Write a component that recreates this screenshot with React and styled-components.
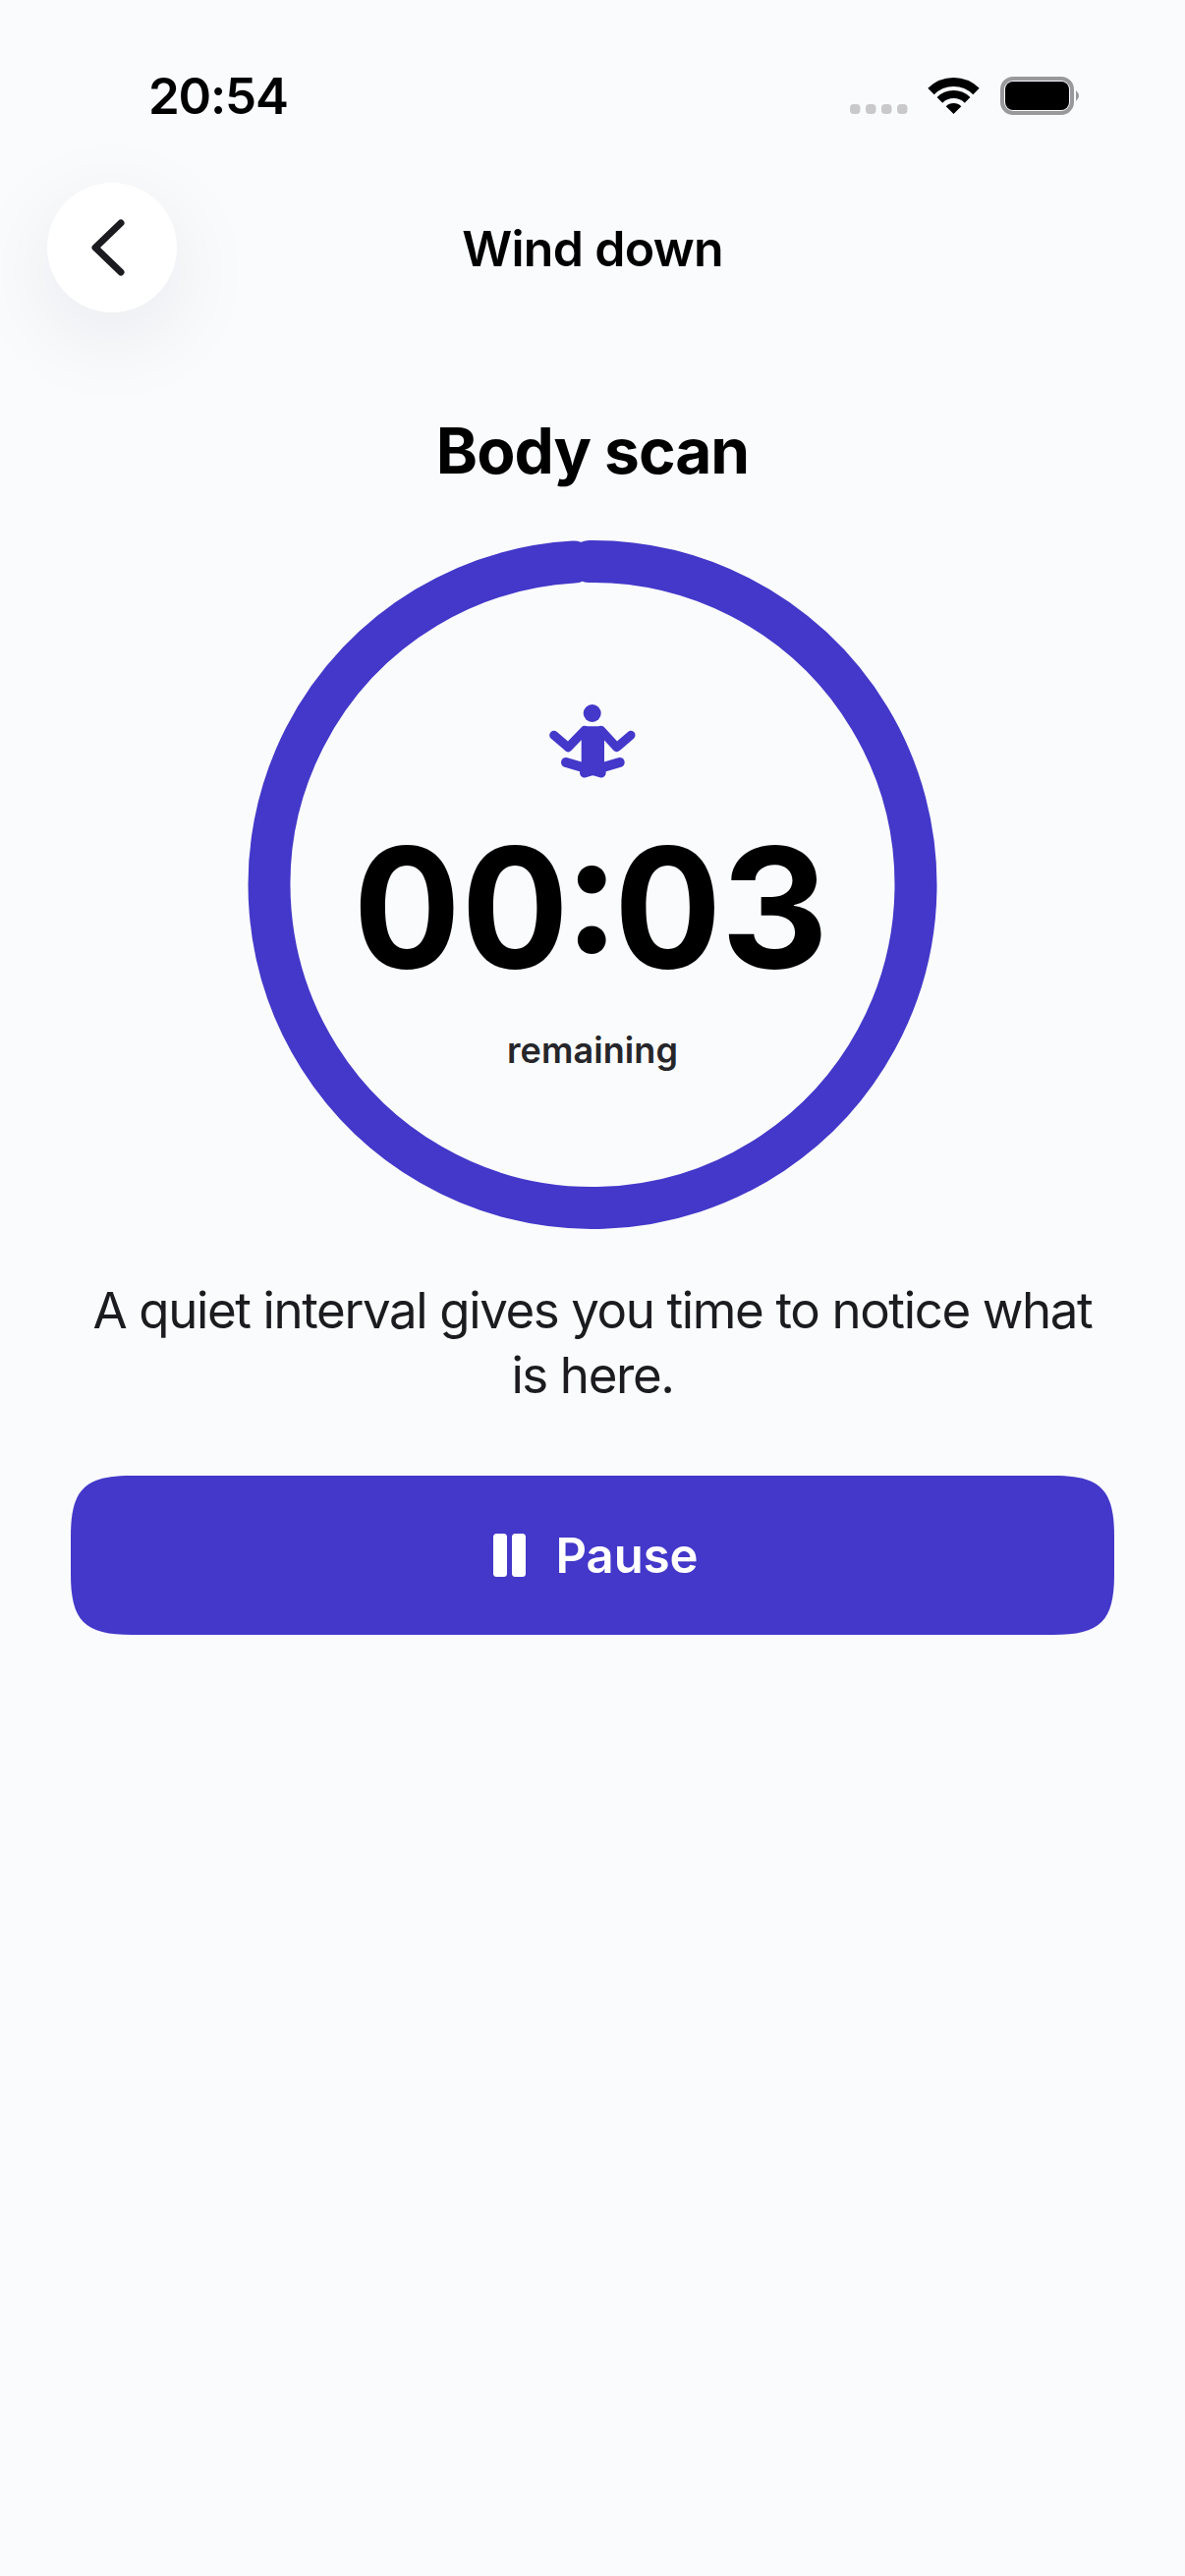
import React from "react";
import styled, { createGlobalStyle } from "styled-components";

const Global = createGlobalStyle`
  html, body { margin: 0; padding: 0; background: #fafbfd; }
  body { font-family: Inter, "Noto Sans", sans-serif; color: #000; }
`;

const Page = styled.div`
  width: 1206px;
  height: 2622px;
  background: #fafbfd;
  display: flex;
  flex-direction: column;
  overflow: hidden;
`;

const StatusBar = styled.div`
  height: 186px;
  padding: 68px 101px 0 151px;
  box-sizing: border-box;
  display: flex;
  justify-content: space-between;
  align-items: flex-start;
`;

const Clock = styled.div`
  font-size: 51px;
  line-height: 60px;
  font-weight: 600;
  letter-spacing: -1.2px;
`;

const StatusIcons = styled.div`
  display: flex;
  align-items: center;
  margin-top: 2px;
`;

const NavBar = styled.div`
  height: 132px;
  display: flex;
  align-items: center;
  padding: 0 48px;
  position: relative;
`;

const BackButton = styled.div`
  width: 132px;
  height: 132px;
  border-radius: 50%;
  background: #fff;
  display: flex;
  align-items: center;
  justify-content: center;
  box-shadow: 0 24px 90px rgba(20, 24, 40, 0.08);
  svg { margin-right: 9px; }
`;

const NavTitle = styled.div`
  position: absolute;
  left: 0;
  right: 0;
  top: 37px;
  text-align: center;
  font-size: 50px;
  font-weight: 600;
  line-height: 60px;
  letter-spacing: -0.7px;
`;

const Main = styled.div`
  display: flex;
  flex-direction: column;
  align-items: center;
  padding: 0 72px;
`;

const Heading = styled.h1`
  margin: 105px 0 0;
  font-size: 64px;
  line-height: 72px;
  font-weight: 700;
  letter-spacing: -1px;
`;

const RingWrap = styled.div`
  margin-top: 54px;
  width: 702px;
  height: 702px;
  position: relative;
  display: flex;
  flex-direction: column;
  align-items: center;
`;

const Ring = styled.svg`
  position: absolute;
  inset: 0;
`;

const Figure = styled.div`
  margin-top: 167px;
  height: 78px;
  width: 90px;
`;

const Time = styled.div`
  margin-top: 41px;
  margin-left: -2px;
  font-size: 170px;
  line-height: 176px;
  font-weight: 700;
  font-variant-numeric: tabular-nums;
`;

const Remaining = styled.div`
  margin-top: 36px;
  font-size: 36px;
  line-height: 44px;
  font-weight: 600;
  letter-spacing: 0.1px;
  color: #26262a;
`;

const Body = styled.p`
  margin: 50px 0 0;
  font-size: 51px;
  line-height: 66px;
  letter-spacing: -1.38px;
  text-align: center;
  color: #1c1c20;
  width: 1062px;
`;

const PauseButton = styled.div`
  margin-top: 69px;
  width: 1062px;
  height: 162px;
  box-sizing: border-box;
  padding-left: 7px;
  background: #4338c9;
  clip-path: path("M0 81 C0 70 0 62 0 62 C0 14 14 0 62 0 L1000 0 C1048 0 1062 14 1062 62 L1062 100 C1062 148 1048 162 1000 162 L62 162 C14 162 0 148 0 100 Z");
  color: #fff;
  display: flex;
  align-items: center;
  justify-content: center;
  gap: 30px;
  font-size: 49px;
  font-weight: 600;
`;

const C = 351;
const R = 329;
const yOn = (dx) => C - Math.sqrt(R * R - dx * dx) + 0.5;

export default function App() {
  return (
    <Page>
      <Global />
      <StatusBar>
        <Clock>20:54</Clock>
        <StatusIcons>
          <svg width="240" height="50" viewBox="0 0 240 50">
            <g fill="#c9c9cc">
              <rect x="0" y="36" width="10.5" height="10" rx="4" />
              <rect x="16" y="36" width="10.5" height="10" rx="4" />
              <rect x="32" y="36" width="10.5" height="10" rx="4" />
              <rect x="48" y="36" width="10.5" height="10" rx="4" />
            </g>
            <g fill="none" stroke="#000">
              <path d="M82.5 23 A32.5 32.5 0 0 1 128.5 23" strokeWidth="9" />
              <path d="M91.4 31.9 A20 20 0 0 1 119.6 31.9" strokeWidth="8" />
            </g>
            <path d="M105.5 46 L97.7 38.2 A11 11 0 0 1 113.3 38.2 Z" fill="#000" />
            <rect x="155" y="10" width="71" height="35" rx="11" fill="none" stroke="#99999c" strokeWidth="4" />
            <rect x="158" y="13" width="65" height="29" rx="8" fill="#000" />
            <path d="M230 22 Q236 27.5 230 33 Z" fill="#99999c" />
          </svg>
        </StatusIcons>
      </StatusBar>
      <NavBar>
        <BackButton>
          <svg width="34" height="58" viewBox="0 0 34 58" fill="none" stroke="#1c1c20" strokeWidth="7" strokeLinecap="round" strokeLinejoin="round">
            <path d="M30 4 L4 29 L30 54" />
          </svg>
        </BackButton>
        <NavTitle>Wind down</NavTitle>
      </NavBar>
      <Main>
        <Heading>Body scan</Heading>
        <RingWrap>
          <Ring width="702" height="702" viewBox="0 0 702 702">
            <path
              d={`M ${C - 3} ${yOn(3)} A ${R} ${R} 0 1 1 ${C - 19} ${yOn(19)}`}
              fill="none"
              stroke="#4338c9"
              strokeWidth="43"
              strokeLinecap="round"
            />
          </Ring>
          <Figure>
            <svg width="90" height="78" viewBox="0 0 90 78">
              <circle cx="44.7" cy="10" r="9" fill="#4338c9" />
              <path d="M37 23.3 H54 C56 23.3 57 25 57 27 V71 H33.7 V27 C33.7 25 35 23.3 37 23.3 Z" fill="#4338c9" />
              <g fill="none" stroke="#4338c9" strokeLinecap="round" strokeLinejoin="round">
                <path d="M5.7 32.3 L20.3 44.7 L37 27.3" strokeWidth="9" />
                <path d="M84 32.3 L69.7 44.7 L53.7 27.3" strokeWidth="9" />
                <path d="M18 60 L53.7 70.5" strokeWidth="10" />
                <path d="M72.7 60 L37 70.5" strokeWidth="10" />
              </g>
            </svg>
          </Figure>
          <Time>00:03</Time>
          <Remaining>remaining</Remaining>
        </RingWrap>
        <Body>A quiet interval gives you time to notice what is here.</Body>
        <PauseButton>
          <svg width="33" height="44" viewBox="0 0 33 44" fill="#fff">
            <rect x="0" y="0" width="14" height="44" rx="3.5" />
            <rect x="19" y="0" width="14" height="44" rx="3.5" />
          </svg>
          Pause
        </PauseButton>
      </Main>
    </Page>
  );
}
